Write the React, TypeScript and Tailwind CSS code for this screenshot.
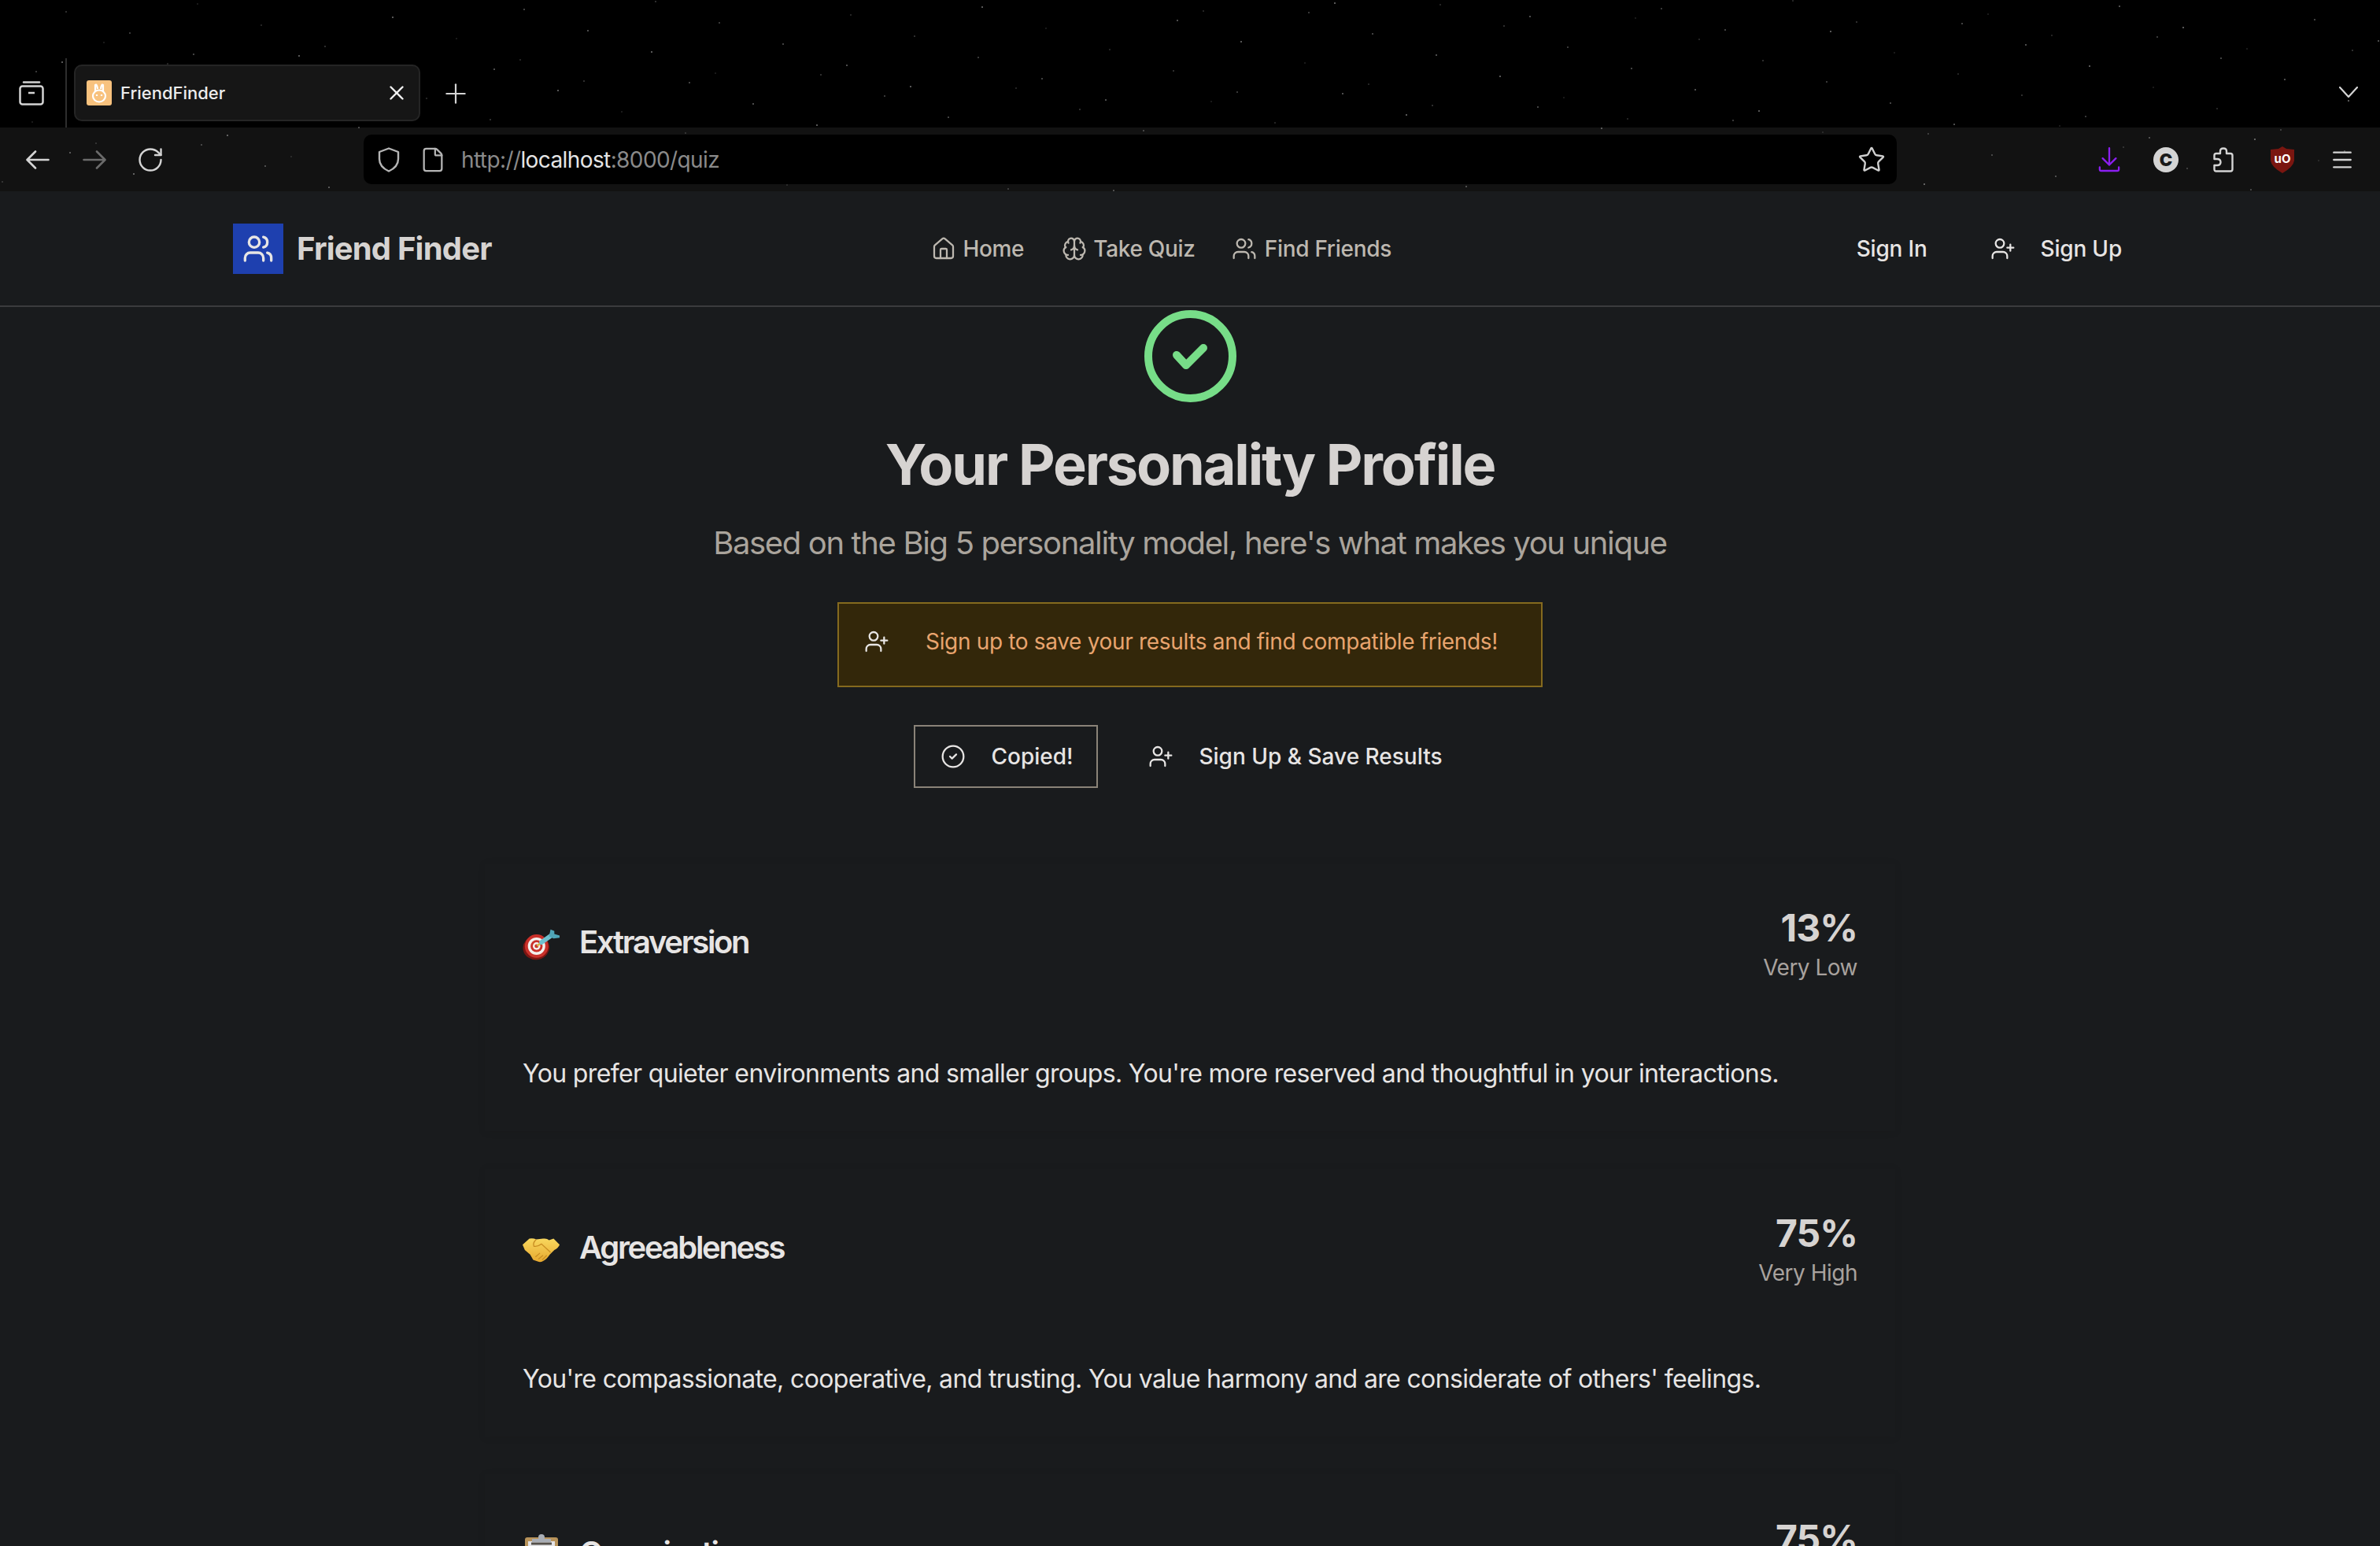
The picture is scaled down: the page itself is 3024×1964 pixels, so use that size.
import { Brain, CircleCheck, File, House, Menu, Plus, RotateCw, Star, UserPlus, Users, X } from 'lucide-react';

const traits = [
  { name: 'Extraversion', emoji: 'dart', score: '13%', label: 'Very Low', text: "You prefer quieter environments and smaller groups. You're more reserved and thoughtful in your interactions." },
  { name: 'Agreeableness', emoji: 'hands', score: '75%', label: 'Very High', text: "You're compassionate, cooperative, and trusting. You value harmony and are considerate of others' feelings." },
  { name: 'Organization', emoji: 'clip', score: '75%', label: 'Very High', text: "You're organized, disciplined, and reliable. You plan ahead and follow through on your commitments." },
];

// faint specks of the browser theme
const specks = Array.from({ length: 170 }, (_, i) => ({
  x: (i * 787 + 131) % 3024,
  y: (i * 397 + 53) % 243,
  o: 0.1 + ((i * 13) % 7) * 0.04,
}));

function Emoji({ kind }: { kind: string }) {
  if (kind === 'dart') {
    return (
      <svg width="50" height="42" viewBox="0 0 50 42">
        <ellipse cx="18" cy="25" rx="17.5" ry="16" fill="#7a1512" transform="rotate(-10 18 25)" />
        <circle cx="18.5" cy="23" r="15.5" fill="#c9302a" />
        <circle cx="18.5" cy="23" r="11.5" fill="#f4f1ee" />
        <circle cx="18.5" cy="23" r="8" fill="#c9302a" />
        <circle cx="18.5" cy="23" r="5" fill="#f4f1ee" />
        <circle cx="18.5" cy="23" r="2.5" fill="#c9302a" />
        <path d="M19 23 L26 17" stroke="#d9b13b" strokeWidth="2.5" />
        <path d="M25 18 L38 9" stroke="#6fc0cf" strokeWidth="6" strokeLinecap="round" />
        <path d="M35 10 L37 1 L42 3 L42 7 L49 9 L49 12 L41 13 Z" fill="#4fa6b8" />
      </svg>
    );
  }
  if (kind === 'hands') {
    return (
      <svg width="50" height="33" viewBox="0 0 50 33">
        <defs>
          <linearGradient id="handFill" x1="0" y1="0" x2="0" y2="1">
            <stop offset="0" stopColor="#f8d75e" />
            <stop offset="1" stopColor="#e7a92f" />
          </linearGradient>
        </defs>
        <path d="M0 9 L9 1 Q14 0 18 2 L27 1 Q32 0 35 3 L41 1 L49 9 Q47 14 42 16 L36 22 Q32 28 28 30 Q24 33 20 31 L14 29 L10 22 L3 16 Z" fill="url(#handFill)" />
        <path d="M18 2 Q13 7 15 11 Q20 12 25 8 L37 19" fill="none" stroke="#c98d22" strokeWidth="1.4" />
        <path d="M21 28 L27 23 M17 25 L23 20 M26 29 L32 23" stroke="#c98d22" strokeWidth="1.3" />
      </svg>
    );
  }
  return (
    <svg width="44" height="54" viewBox="0 0 44 54">
      <rect x="1" y="4" width="42" height="50" rx="3" fill="#b8935a" />
      <rect x="5" y="9" width="34" height="42" fill="#e3e3e6" />
      <path d="M9 12 H35" stroke="#55504a" strokeWidth="3" />
      <path d="M10 6 H34 V10 H10 Z" fill="#a9aeb6" />
      <circle cx="22" cy="4" r="4" fill="#a9aeb6" />
      <path d="M10 22 H34 M10 30 H34 M10 38 H28" stroke="#a3a3a8" strokeWidth="2" />
    </svg>
  );
}

function TraitCard({ trait }: { trait: (typeof traits)[number] }) {
  return (
    <div className="bg-[#191b1d] shadow-[0_1px_10px_rgba(0,0,0,0.08)] p-12 h-[340px] shrink-0">
      <div className="flex items-start justify-between h-[124px]">
        <div className="flex items-center gap-6 h-[104px]">
          <div className="w-[48px] flex justify-center mt-[6px]">
            <Emoji kind={trait.emoji} />
          </div>
          <h3 className="text-[40px] leading-[56px] font-semibold tracking-[-0.058em] text-[#e7e5e4]">{trait.name}</h3>
        </div>
        <div className="text-right mt-[6px]">
          <div className="text-[48px] leading-[56px] font-bold tracking-[-0.02em] text-[#d6d3d1]">{trait.score}</div>
          <div className="text-[28px] leading-[40px] mt-[2px] tracking-[-0.5px] text-[#a8a29e]">{trait.label}</div>
        </div>
      </div>
      <p className="mt-[73px] text-[32px] leading-[44px] tracking-[-0.02em] text-[#e7e5e4]">{trait.text}</p>
    </div>
  );
}

export default function App() {
  return (
    <div className="h-[1964px] w-[3024px] overflow-hidden bg-[#191b1d] font-['Inter',sans-serif]">
      {/* browser chrome */}
      <div className="relative bg-black">
        <svg className="absolute inset-0 pointer-events-none" width="3024" height="243">
          {specks.map((s, i) => (
            <rect key={i} x={s.x} y={s.y} width="2" height="2" fill="#ffffff" opacity={s.o} />
          ))}
        </svg>
        <div className="relative h-[162px] flex items-end">
          <div className="w-[85px] h-[88px] flex items-center justify-center pr-[4px] border-r-2 border-[#2e2e2e]">
            <svg width="32" height="32" viewBox="0 0 32 32" fill="none" stroke="#d4d4d4" strokeWidth="2.5">
              <path d="M6 2.5 H26" strokeLinecap="round" />
              <rect x="1.5" y="7.5" width="29" height="23" rx="3" />
              <path d="M12 16 H20" />
            </svg>
          </div>
          <div className="ml-[9px] mb-[8px] w-[440px] h-[72px] rounded-[10px] bg-[#161616] border-2 border-[#252525] flex items-center pl-[14px] pr-[13px]">
            <div className="w-[32px] h-[32px] rounded-[3px] bg-[#f8c27e] flex items-center justify-center">
              <svg width="22" height="26" viewBox="0 0 22 26" fill="none" stroke="#ffffff" strokeWidth="2.2">
                <path d="M6 11 V3 Q8 1 9 8 M16 11 V3 Q14 1 13 8" />
                <ellipse cx="11" cy="17" rx="8" ry="7.5" />
                <path d="M8 15 V17 M14 15 V17" />
              </svg>
            </div>
            <span className="ml-[11px] text-[22px] font-medium text-[#ececec] flex-1">FriendFinder</span>
            <X size={30} strokeWidth={1.9} color="#f2f2f2" />
          </div>
          <div className="ml-[25px] mb-[23px]">
            <Plus size={40} strokeWidth={1.3} color="#d4d4d4" />
          </div>
          <div className="absolute left-[2972px] top-[110px]">
            <svg width="24" height="14" viewBox="0 0 24 14" fill="none" stroke="#d4d4d4" strokeWidth="2.2" strokeLinecap="round">
              <path d="M1 1 L12 13 L23 1" />
            </svg>
          </div>
        </div>
        <div className="relative h-[81px] bg-white/[0.07] flex items-center">
          <div className="w-[462px] flex items-center pl-[33px]">
            <svg width="30" height="24" viewBox="0 0 30 24" fill="none" stroke="#d4d4d4" strokeWidth="2.6" strokeLinecap="round" strokeLinejoin="round">
              <path d="M28.5 12 H2 M12 1.5 L1.5 12 L12 22.5" />
            </svg>
            <svg className="ml-[42px]" width="30" height="24" viewBox="0 0 30 24" fill="none" stroke="#6b6b6b" strokeWidth="2.6" strokeLinecap="round" strokeLinejoin="round">
              <path d="M1.5 12 H28 M18 1.5 L28.5 12 L18 22.5" />
            </svg>
            <RotateCw className="ml-[38px]" size={36} strokeWidth={1.6} color="#d4d4d4" />
          </div>
          <div className="w-[1948px] h-[63px] rounded-[10px] bg-black flex items-center pl-[18px] pr-[14px]">
            <svg width="28" height="32" viewBox="0 0 28 32" fill="none" stroke="#b5b5b5" strokeWidth="2.4" strokeLinejoin="round">
              <path d="M14 1.5 L26 6 V15 Q26 25 14 30.5 Q2 25 2 15 V6 Z" />
            </svg>
            <File size={34} strokeWidth={1.6} color="#b5b5b5" className="ml-[25px]" />
            <span className="ml-[19px] text-[28px] tracking-[-0.6px] text-[#8a8a8a] flex-1">
              http://<span className="text-[#e5e5e5]">localhost</span>:8000/quiz
            </span>
            <Star size={36} strokeWidth={1.6} color="#cfcfcf" />
          </div>
          <div className="flex items-center ml-[256px]">
            <svg width="28" height="34" viewBox="0 0 30 34" fill="none" stroke="#8b1ff0" strokeWidth="2.5" strokeLinecap="round" strokeLinejoin="round">
              <path d="M15 1 V24 M6 15 L15 24 L24 15" />
              <path d="M2 27 V30 Q2 32 4 32 H26 Q28 32 28 30 V27" />
            </svg>
            <div className="ml-[42px] w-[32px] h-[32px] rounded-full bg-[#d4d4d4] flex items-center justify-center text-[22px] font-black leading-none text-[#1a1a1a]">C</div>
            <svg className="ml-[44px]" width="26" height="32" viewBox="0 0 26 32" fill="none" stroke="#d4d4d4" strokeWidth="2.4" strokeLinejoin="round">
              <path d="M9 8 V5 Q9 1.5 13 1.5 Q17 1.5 17 5 V8 H22 Q24.5 8 24.5 10.5 V28 Q24.5 30.5 22 30.5 H4 Q1.5 30.5 1.5 28 V23 H5 Q9.5 23 9.5 19 Q9.5 15 5 15 H1.5 V10.5 Q1.5 8 4 8 Z" />
            </svg>
            <svg className="ml-[47px]" width="30" height="34" viewBox="0 0 30 34">
              <path d="M15 0 L20 3 L30 4 V18 Q29 26 15 34 Q1 26 0 18 V4 L10 3 Z" fill="#7a1610" />
              <text x="15" y="21" textAnchor="middle" fontSize="15" fontWeight="700" fill="#ffffff" fontFamily="Inter">uO</text>
            </svg>
            <Menu className="ml-[45px]" size={32} strokeWidth={1.8} color="#d4d4d4" />
          </div>
        </div>
      </div>

      {/* app nav */}
      <nav className="h-[147px] border-b-2 border-[#3a3b3d] bg-[#191b1d]">
        <div className="w-[2432px] h-[145px] mx-auto flex items-center justify-between">
          <div className="flex items-center gap-[17px]">
            <div className="w-[64px] h-[64px] bg-[#1e40af] flex items-center justify-center">
              <Users size={40} strokeWidth={2} color="#e7e5e4" />
            </div>
            <span className="text-[40px] font-bold tracking-[-0.02em] text-[#d6d3d1]">Friend Finder</span>
          </div>
          <div className="flex items-center px-[32px] text-[28px] tracking-[-0.3px] font-medium text-[#bdb8b0]">
            <a className="flex items-center gap-[8px]"><House size={32} strokeWidth={1.7} />Home</a>
            <a className="ml-[48px] flex items-center gap-[8px]"><Brain size={32} strokeWidth={1.7} />Take Quiz</a>
            <a className="ml-[46px] flex items-center gap-[10px]"><Users size={32} strokeWidth={1.7} />Find Friends</a>
          </div>
          <div className="flex items-center text-[28px] tracking-[-0.2px] font-medium text-[#e7e5e4]">
            <a className="px-[32px]">Sign In</a>
            <a className="ml-[16px] px-[32px] flex items-center gap-[32px]"><UserPlus size={32} strokeWidth={1.7} />Sign Up</a>
          </div>
        </div>
      </nav>

      {/* results */}
      <main className="w-[1792px] mx-auto flex flex-col items-center">
        <div className="mt-[4px] w-[117px] h-[117px] rounded-full border-[10px] border-[#77dd88] flex items-center justify-center">
          <svg width="44" height="32" viewBox="0 0 44 32" fill="none" stroke="#77dd88" strokeWidth="10" strokeLinecap="round" strokeLinejoin="round">
            <path d="M5 14 L17 27 L39 5" />
          </svg>
        </div>
        <h1 className="mt-[39px] text-[72px] leading-[80px] font-bold tracking-[-0.03em] text-[#d6d3d1]">Your Personality Profile</h1>
        <p className="mt-[38px] text-[40px] leading-[44px] tracking-[-0.034em] text-[#aaa49c]">Based on the Big 5 personality model, here's what makes you unique</p>
        <div className="mt-[53px] w-[896px] h-[108px] border-2 border-[#856a1e] bg-[#33270a] flex pt-[30px] pl-[32px]">
          <UserPlus className="mt-[2px]" size={32} strokeWidth={1.7} color="#e7e5e4" />
          <span className="ml-[46px] text-[28px] leading-[36px] tracking-[-0.33px] whitespace-nowrap text-[#e8a46e]">Sign up to save your results and find compatible friends!</span>
        </div>
        <div className="mt-[48px] mr-[30px] flex items-center text-[28px] font-medium text-[#e7e5e4]">
          <button className="h-[80px] w-[234px] border-2 border-[#8a8378] flex items-center pl-[32px] gap-[32px]">
            <CircleCheck size={32} strokeWidth={1.7} />Copied!
          </button>
          <button className="ml-[64px] h-[80px] flex items-center gap-[32px]">
            <UserPlus size={32} strokeWidth={1.7} />Sign Up &amp; Save Results
          </button>
        </div>
        <div className="mt-[96px] w-full flex flex-col gap-[48px]">
          {traits.map(t => <TraitCard key={t.name} trait={t} />)}
        </div>
      </main>
    </div>
  );
}
